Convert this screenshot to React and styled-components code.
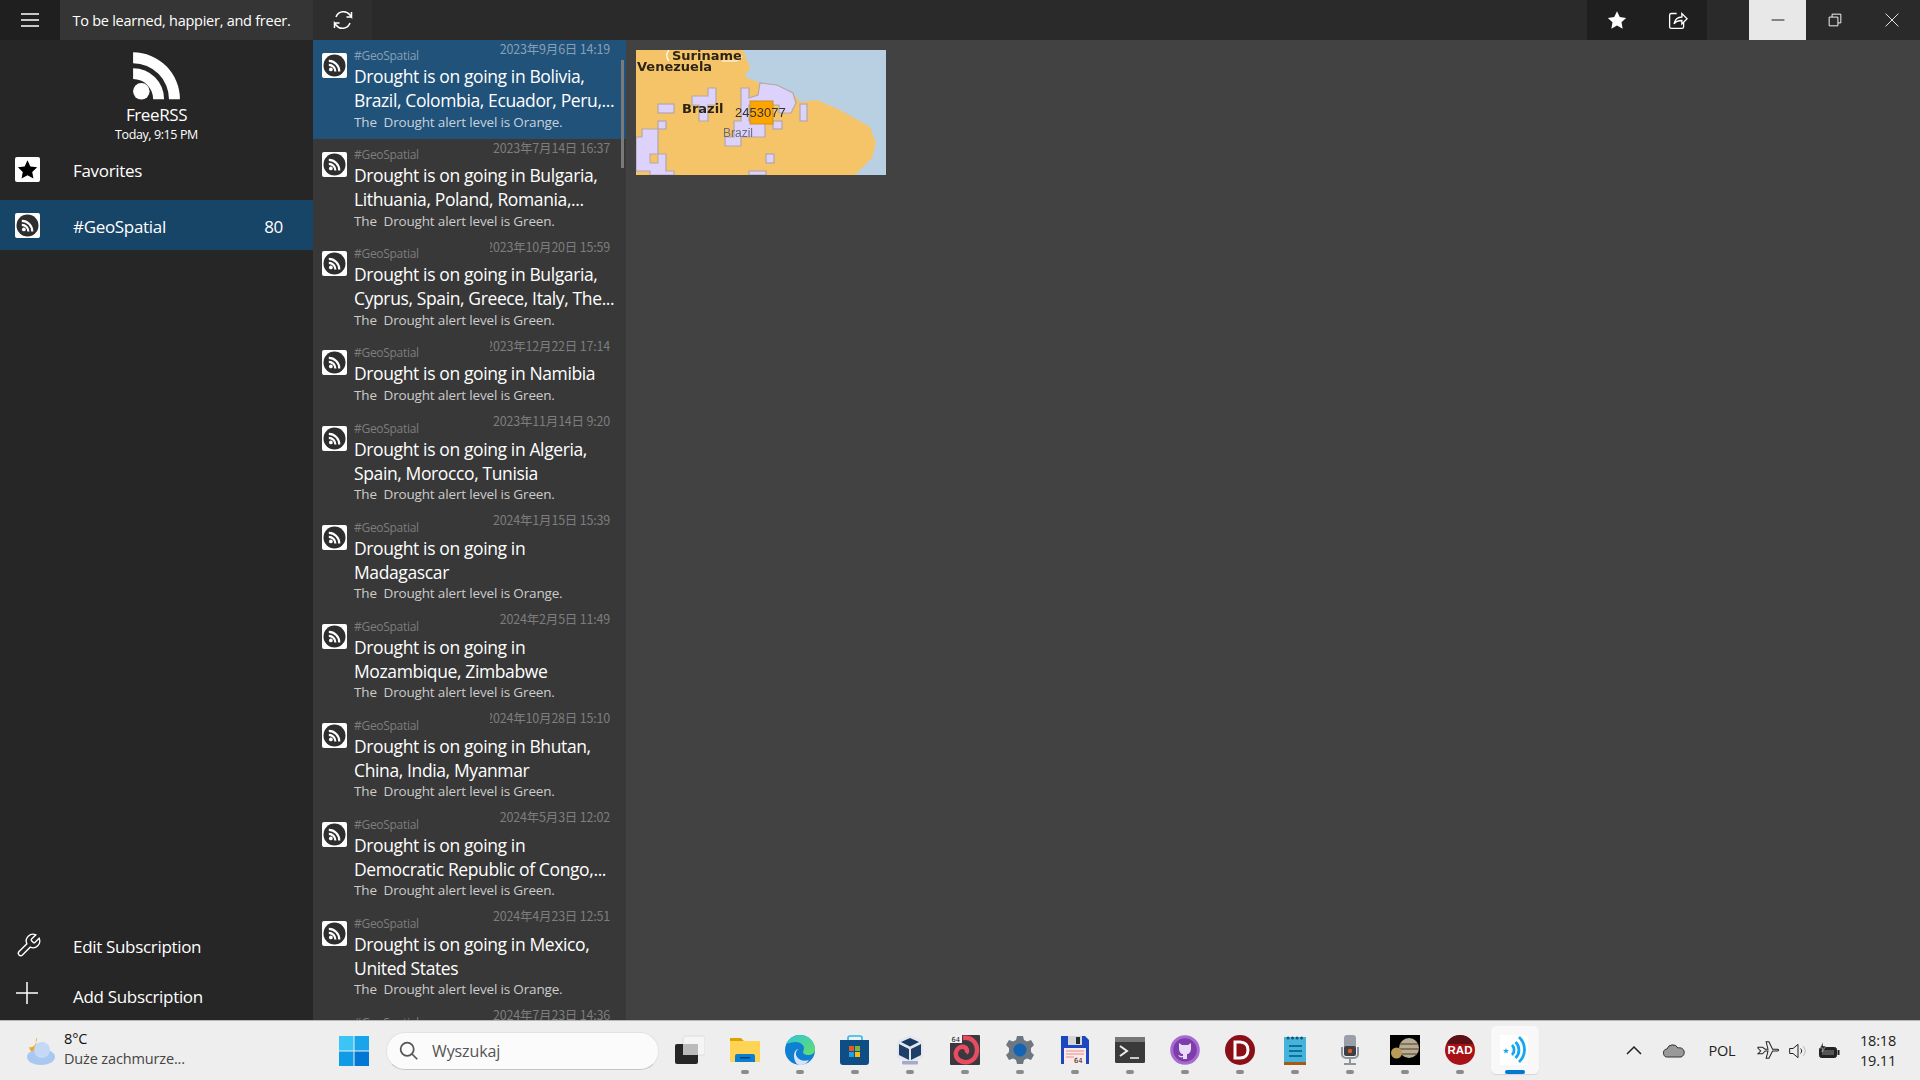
import React from "react";
import styled, { createGlobalStyle } from "styled-components";

const GlobalStyle = createGlobalStyle`
  html, body { margin: 0; padding: 0; background: #424242; }
  * { box-sizing: border-box; }
  body { font-family: "Open Sans", "Noto Sans CJK SC", sans-serif; overflow: hidden; }
`;

const Page = styled.div`
  width: 1920px;
  height: 1080px;
  display: flex;
  flex-direction: column;
  overflow: hidden;
`;

/* title bar */
const TitleBar = styled.header`
  height: 40px;
  flex: none;
  display: flex;
  background: #2a2a2a;
  color: #fff;
`;
const BarButton = styled.div`
  width: ${(p) => p.$w || 60}px;
  height: 40px;
  flex: none;
  display: flex;
  align-items: center;
  justify-content: center;
  background: ${(p) => p.$bg || "transparent"};
  color: ${(p) => p.$fg || "#fff"};
`;
const AppTitle = styled.div`
  width: 253px;
  flex: none;
  background: #353535;
  padding-left: 12.5px;
  font-size: 14.5px;
  letter-spacing: -0.26px;
  line-height: 41px;
  white-space: nowrap;
`;
const Spacer = styled.div`
  flex: 1;
`;
const BarGroup = styled.div`
  display: flex;
  background: #1f1f1f;
  margin-right: 42px;
`;

/* main */
const Main = styled.main`
  flex: 1;
  min-height: 0;
  display: flex;
`;
const Sidebar = styled.nav`
  width: 313px;
  flex: none;
  background: #262626;
  display: flex;
  flex-direction: column;
  color: #fff;
`;
const Brand = styled.div`
  height: 104px;
  padding-top: 9px;
  display: flex;
  flex-direction: column;
  align-items: center;
`;
const BrandName = styled.div`
  margin-top: 1.5px;
  font-size: 17px;
  letter-spacing: -0.4px;
  line-height: 22px;
`;
const BrandDate = styled.div`
  font-size: 12.5px;
  letter-spacing: -0.4px;
  line-height: 18px;
`;
const NavItem = styled.div`
  height: 50px;
  display: flex;
  align-items: center;
  padding: 0 30px 0 15px;
  font-size: 17px;
  letter-spacing: -0.32px;
`;
const ActiveNavItem = styled(NavItem)`
  margin-top: 6px;
  background: #174568;
`;
const NavIcon = styled.div`
  width: 58px;
  flex: none;
  display: flex;
  align-items: center;
  padding-bottom: ${(p) => p.$lift || 0}px;
`;
const NavLabel = styled.span`
  flex: 1;
  padding-top: 3px;
`;
const NavCount = styled.span`
  padding-top: 3px;
`;
const NavBottom = styled.div`
  margin-top: auto;
`;
const Badge = styled.div`
  width: 25px;
  height: 25px;
  border-radius: 2px;
  background: #fff;
  display: flex;
  align-items: center;
  justify-content: center;
`;

/* article list */
const List = styled.section`
  position: relative;
  width: 313px;
  flex: none;
  background: #383838;
  overflow: hidden;
  color: #fff;
`;
const Row = styled.article`
  height: ${(p) => (p.$lines === 1 ? 75.5 : 99)}px;
  display: flex;
  padding: 13px 0 0 9px;
  background: ${(p) => (p.$selected ? "#21527a" : "transparent")};
`;
const RowIcon = styled.div`
  width: 32px;
  flex: none;
`;
const RowBody = styled.div`
  position: relative;
  flex: 1;
  min-width: 0;
`;
const RowTag = styled.div`
  font-size: 12px;
  letter-spacing: -0.3px;
  line-height: 16px;
  color: ${(p) => (p.$selected ? "#88a0b5" : "#7d7d7d")};
  margin-top: -5px;
`;
const RowDate = styled.div`
  position: absolute;
  top: -13.5px;
  right: 16px;
  width: 120px;
  height: 18px;
  overflow: hidden;
  display: flex;
  justify-content: flex-end;
  white-space: nowrap;
  font-family: "Noto Sans CJK SC", sans-serif;
  font-size: 12.5px;
  line-height: 18px;
  letter-spacing: -0.2px;
  color: ${(p) => (p.$selected ? "#88a0b5" : "#7d7d7d")};
`;
const RowTitle = styled.div`
  font-size: 17.5px;
  line-height: 24px;
  letter-spacing: -0.38px;
  white-space: nowrap;
`;
const RowDesc = styled.div`
  margin-top: 0.5px;
  font-size: 13.5px;
  line-height: 18px;
  letter-spacing: -0.16px;
  white-space: pre;
  color: ${(p) => (p.$selected ? "#c6d3de" : "#cccccc")};
`;
const ScrollThumb = styled.div`
  position: absolute;
  top: 20px;
  right: 2px;
  width: 3px;
  height: 108px;
  background: #7a7a7a;
`;

/* detail */
const Detail = styled.section`
  flex: 1;
  background: #424242;
  padding: 10px;
`;
const MapImage = styled.svg`
  display: block;
  width: 250px;
  height: 125px;
  filter: blur(0.35px);
`;

/* taskbar */
const Taskbar = styled.footer`
  height: 60px;
  flex: none;
  display: flex;
  background: #eeeeee;
  border-top: 1px solid #b8b8b8;
  color: #222;
`;
const Weather = styled.div`
  width: 339px;
  flex: none;
  display: flex;
  align-items: center;
  padding-left: 24px;
  gap: 8px;
`;
const WeatherText = styled.div`
  font-size: 14.5px;
  line-height: 20px;
  letter-spacing: -0.15px;
  color: #444;
  margin-top: -2.5px;
`;
const WeatherTemp = styled.div`
  color: #111;
`;
const WinSlot = styled.div`
  width: 47px;
  flex: none;
  display: flex;
  align-items: center;
`;
const SearchBox = styled.div`
  width: 273px;
  height: 38px;
  flex: none;
  align-self: center;
  display: flex;
  align-items: center;
  gap: 13px;
  padding-left: 11px;
  background: #fbfbfb;
  border-radius: 19px;
  border: 1px solid #e2e2e2;
  border-bottom-color: #c4c4c4;
  font-size: 16px;
  letter-spacing: -0.12px;
  color: #555;
`;
const Apps = styled.div`
  display: flex;
  margin-left: 3.5px;
`;
const AppSlot = styled.div`
  position: relative;
  width: 55px;
  height: 59px;
  flex: none;
  display: flex;
  flex-direction: column;
  align-items: center;
  padding-top: 14px;
`;
const AppIcon = styled.div`
  width: 30px;
  height: 30px;
  display: flex;
`;
const Dot = styled.div`
  width: 8px;
  height: 4px;
  margin-top: 5px;
  border-radius: 2px;
  background: #8b8b8b;
`;
const ActiveSlot = styled(AppSlot)`
  &::before {
    content: "";
    position: absolute;
    top: 5px;
    left: 3.5px;
    width: 48px;
    height: 48px;
    border-radius: 5px;
    background: #f8f8f8;
    box-shadow: 0 1px 1px #d5d5d5;
  }
  & > * { position: relative; }
`;
const ActiveBar = styled.div`
  width: 20px;
  height: 4px;
  margin-top: 5px;
  border-radius: 2px;
  background: #0078d4;
`;
const Tray = styled.div`
  margin-left: auto;
  display: flex;
  align-items: center;
  color: #222;
`;
const TrayItem = styled.div`
  width: ${(p) => p.$w}px;
  flex: none;
  display: flex;
  justify-content: center;
  font-size: 14.5px;
  letter-spacing: -0.2px;
`;
const Clock = styled.div`
  width: 70px;
  flex: none;
  padding-right: 14px;
  text-align: center;
  font-size: 14.5px;
  line-height: 20px;
  letter-spacing: -0.2px;
`;

/* icons */
const Rss = ({ size = 25, color = "#fff" }) => (
  <svg width={size} height={size} viewBox="0 0 24 24">
    <circle cx="5.2" cy="19" r="3.7" fill={color} />
    <path d="M1.5 8.6a13.9 13.9 0 0 1 13.9 13.9h-4.9a9 9 0 0 0-9-9z" fill={color} />
    <path d="M1.5 1.5a21 21 0 0 1 21 21h-4.9A16.1 16.1 0 0 0 1.5 6.4z" fill={color} />
  </svg>
);
const FeedBadge = () => (
  <Badge>
    <svg width="23" height="23" viewBox="0 0 23 23">
      <circle cx="11.5" cy="11.5" r="11" fill="#2e2e2e" />
      <g transform="translate(5 5) scale(.55)">
        <circle cx="5.2" cy="19" r="3.4" fill="#fff" />
        <path d="M1.5 8.6a13.9 13.9 0 0 1 13.9 13.9h-4a9.9 9.9 0 0 0-9.9-9.900z" fill="#fff" />
        <path d="M1.5 1.5a21 21 0 0 1 21 21h-4A17 17 0 0 0 1.5 5.5z" fill="#fff" />
      </g>
    </svg>
  </Badge>
);
const StarBadge = () => (
  <Badge>
    <svg width="21" height="21" viewBox="0 0 24 24">
      <path d="M12 1.5l3.3 7 7.7 1-5.6 5.3 1.4 7.6L12 18.7l-6.8 3.7 1.4-7.6L1 9.5l7.7-1z" fill="#000" />
    </svg>
  </Badge>
);
const Line = ({ d, size = 24, sw = 1.5 }) => (
  <svg width={size} height={size} viewBox="0 0 24 24" fill="none" stroke="currentColor" strokeWidth={sw}>
    <path d={d} />
  </svg>
);

const Folder = () => (
  <svg width="30" height="30" viewBox="0 0 30 30">
    <path d="M0 3h11l3 3h16v21H0z" fill="#e0a100" />
    <rect y="6" width="30" height="21" fill="#ffd455" />
    <path d="M5 27v-6a2 2 0 0 1 2-2h16a2 2 0 0 1 2 2v6z" fill="#0a7fd0" />
    <rect x="10" y="22" width="10" height="1.5" fill="#063d70" />
  </svg>
);
const TaskView = () => (
  <svg width="30" height="30" viewBox="0 0 30 30">
    <rect x="8" y="1" width="22" height="19" rx="2" fill="#f5f5f5" stroke="#ddd" />
    <rect y="9" width="23" height="20" rx="2" fill="#262626" />
    <rect x="8" y="9" width="15" height="11" fill="#bbb" />
  </svg>
);
const Edge = () => (
  <svg width="30" height="30" viewBox="0 0 30 30">
    <defs>
      <linearGradient id="edgeA" x1="0" y1="0" x2="1" y2="1">
        <stop offset="0" stopColor="#2ec6d8" />
        <stop offset="1" stopColor="#67de6a" />
      </linearGradient>
    </defs>
    <circle cx="15" cy="15" r="15" fill="#0f7fd2" />
    <path d="M1 9C4 2 11 0 15 0c9 0 15 7 15 14 0 5-4 6-7 6-3 0-5-1-5-3 0-1 1-2 1-4 0-3-4-6-8-6-4 0-8 1-10 2z" fill="url(#edgeA)" />
    <path d="M14 14c-3 1-4 5-2 8 2 3 7 5 12 3-2 3-5 5-9 5C11 30 9 25 9 21c0-4 2-7 5-7z" fill="#eef" opacity=".9" />
  </svg>
);
const Store = () => (
  <svg width="30" height="30" viewBox="0 0 30 30">
    <path d="M8 6V3a2 2 0 0 1 2-2h10a2 2 0 0 1 2 2v3" fill="none" stroke="#28b8ea" strokeWidth="1.6" />
    <path d="M0 5h29v22a3 3 0 0 1-3 3H3a3 3 0 0 1-3-3z" fill="#0f4d85" />
    <rect x="9" y="11" width="5" height="5" fill="#e8562a" />
    <rect x="15" y="11" width="5" height="5" fill="#7cb82f" />
    <rect x="9" y="17" width="5" height="5" fill="#1ba2e6" />
    <rect x="15" y="17" width="5" height="5" fill="#fdb813" />
  </svg>
);
const VBox = () => (
  <svg width="30" height="30" viewBox="0 0 30 30">
    <path d="M15 0l13 6v17l-13 6-13-6V6z" fill="#e4e8ee" />
    <path d="M15 3l9 4-9 4.5L6 7z" fill="#183a64" />
    <path d="M4 9l10 5v11L4 20zM26 9l-10 5v11l10-5z" fill="#1e3f68" />
    <rect x="7" y="26" width="16" height="3.5" rx="1" fill="#a6a9c8" />
  </svg>
);
const Debian = () => (
  <svg width="30" height="30" viewBox="0 0 30 30">
    <rect width="30" height="30" rx="1" fill="#3b3940" />
    <path d="M13 3c8-1 14 4 14 12s-6 13-13 12c-6-1-9-5-8-10 1-4 5-6 8-5s4 4 2 6" fill="none" stroke="#ea4c5f" strokeWidth="4.5" />
    <rect width="12" height="8" fill="#f2f2f2" />
    <text x="1.5" y="7" fontSize="7" fontFamily="DejaVu Sans Mono" fill="#222">64</text>
  </svg>
);
const Gear = () => (
  <svg width="30" height="30" viewBox="0 0 30 30">
    <path d="M12 1h6l1 4 3 1.5 4-1.5 3 5-3 3v4l3 3-3 5-4-1.5-3 1.5-1 4h-6l-1-4-3-1.5-4 1.5-3-5 3-3v-4l-3-3 3-5 4 1.5 3-1.5z" fill="#6d7781" />
    <circle cx="15" cy="15" r="6.5" fill="#1464b4" />
  </svg>
);
const Floppy = () => (
  <svg width="30" height="30" viewBox="0 0 30 30">
    <path d="M1 1h24l4 4v24H1z" fill="#1c47c0" />
    <rect x="8" y="1" width="14" height="9" fill="#d5d5d5" />
    <rect x="16" y="2" width="4" height="7" fill="#2a2a2a" />
    <rect x="4" y="13" width="22" height="16" fill="#fbe9e9" />
    <path d="M6 16h18M6 19h18M6 22h8" stroke="#e78b8b" />
    <text x="14" y="28" fontSize="7" fontFamily="DejaVu Sans Mono" fill="#222">64</text>
  </svg>
);
const Terminal = () => (
  <svg width="30" height="30" viewBox="0 0 30 30">
    <rect y="2" width="30" height="26" rx="1.5" fill="#3a3a3a" />
    <rect y="2" width="30" height="5" fill="#777" />
    <path d="M5 11l7 5-7 5" fill="none" stroke="#eee" strokeWidth="2" />
    <path d="M15 23h9" stroke="#eee" strokeWidth="1.6" />
  </svg>
);
const GitHub = () => (
  <svg width="30" height="30" viewBox="0 0 30 30">
    <circle cx="15" cy="15" r="13.3" fill="#7d3dab" stroke="#a66bd0" strokeWidth="3" />
    <path d="M9 8l3 2h6l3-2v5c0 4-2 6-4 6v5h-4v-2c-2 1-4 0-5-2 1 0 2 1 3 1h2v-2c-2 0-4-2-4-6z" fill="#eadcf5" />
  </svg>
);
const Dlang = () => (
  <svg width="30" height="30" viewBox="0 0 30 30">
    <circle cx="15" cy="15" r="15" fill="#8b0f16" />
    <path d="M10 7h5c5 0 8 3 8 8s-3 8-8 8h-5z" fill="none" stroke="#fff" strokeWidth="3" />
  </svg>
);
const Notepad = () => (
  <svg width="30" height="30" viewBox="0 0 30 30">
    <rect x="4" y="2" width="22" height="27" fill="#46b3da" />
    <rect x="4" y="27" width="22" height="3" fill="#a65a14" />
    <path d="M8 3h.1M12.5 3h.1M17 3h.1M21.5 3h.1" stroke="#155c7c" strokeWidth="3" strokeLinecap="round" />
    <path d="M9 11h13M9 16h13M9 21h13" stroke="#0f6f9e" strokeWidth="2" />
  </svg>
);
const Mic = () => (
  <svg width="30" height="30" viewBox="0 0 30 30">
    <rect x="9" y="0" width="12" height="20" rx="3" fill="#9aa0a8" />
    <rect x="9" y="11" width="12" height="10" rx="2" fill="#3c3f44" />
    <circle cx="15" cy="16" r="2.2" fill="#e8561f" />
    <path d="M7 12v7a4 4 0 0 0 4 4h8a4 4 0 0 0 4-4v-7M15 23v5M9 29h12" fill="none" stroke="#8c949c" strokeWidth="2" />
  </svg>
);
const Jupiter = () => (
  <svg width="30" height="30" viewBox="0 0 30 30">
    <defs>
      <clipPath id="bigPlanet"><circle cx="19" cy="13" r="10" /></clipPath>
    </defs>
    <rect width="30" height="30" fill="#000" />
    <g clipPath="url(#bigPlanet)">
      <rect x="9" y="3" width="20" height="20" fill="#b5ad96" />
      <path d="M9 9h20M9 14h20M9 19h20" stroke="#7a5f48" strokeWidth="1.5" />
    </g>
    <circle cx="6.5" cy="18" r="5.5" fill="#b89b58" />
  </svg>
);
const Rad = () => (
  <svg width="30" height="30" viewBox="0 0 30 30">
    <circle cx="15" cy="15" r="15" fill="#a81216" />
    <path d="M3 6a15 15 0 0 1 24 0l1 3H2z" fill="#5b1016" />
    <text x="15" y="19" textAnchor="middle" fontSize="11.5" fontWeight="700" fontFamily="Liberation Sans" fill="#fff">RAD</text>
  </svg>
);
const FreeRssApp = () => (
  <svg width="30" height="30" viewBox="0 0 30 30">
    <rect width="28" height="30" fill="#fff" />
    <path d="M6 13l.8 2 2.2.1-1.7 1.3.6 2.1L6 17.300l-1.900 1.200.6-2.100L3 15.100l2.200-.1z" fill="#14a7f0" />
    <g fill="none" stroke="#14a7f0" strokeWidth="2.8">
      <path d="M12 10a7 7 0 0 1 0 10" />
      <path d="M15.5 7a11 11 0 0 1 0 16" />
      <path d="M19 2a17 17 0 0 1 0 25" />
    </g>
  </svg>
);

const MapPicture = () => (
  <MapImage viewBox="0 0 250 125">
    <rect width="250" height="125" fill="#b9cfe2" />
    <path d="M0 0H107L114 17 109 27 124 33 141 35 157 43 164 52 181 50 204 60 234 77 240 93 236 108 219 125H0z" fill="#f5c469" />
    <g fill="#dcd2fb" stroke="#b3a7a8" strokeWidth="1.2">
      <path d="M72 38h8v17H72v16h-9V55H56v-9h16z" />
      <rect x="22" y="54" width="16" height="9" />
      <rect x="22" y="71" width="8" height="8" />
      <path d="M105 38h8v10l9-3 2-12 17 2 16 8 3 10-5 10h-12v-8h-30v16h16v16H105v9H89v-9h9V71h7z" />
      <rect x="137" y="71" width="9" height="8" />
      <rect x="164" y="54" width="7" height="17" />
      <path d="M0 87h6V79h16v25h8v17h8v4H14v-4H0z" />
      <rect x="130" y="104" width="8" height="9" />
      <rect x="113" y="121" width="17" height="4" />
    </g>
    <rect x="14" y="104" width="8" height="9" fill="#f5c469" stroke="#b3a7a8" />
    <rect x="114" y="51" width="23" height="23" fill="#ffa500" stroke="#c8902e" />
    <path d="M33 0c-3 3-3 8 0 11M86 11h14c2 0 4-3 6-5" fill="none" stroke="#fff" strokeWidth="1.2" />
    <g fontFamily="DejaVu Sans" fontWeight="700" fill="#2c2416">
      <text x="36" y="10" fontSize="13">Suriname</text>
      <text x="1" y="21" fontSize="13">Venezuela</text>
      <text x="46" y="63" fontSize="13">Brazil</text>
    </g>
    <text x="99" y="67" fontSize="13" fontFamily="Liberation Sans" fill="#333">2453077</text>
    <text x="87" y="87" fontSize="12" fontFamily="Liberation Sans" fill="#6d6a80">Brazil</text>
  </MapImage>
);

const rows = [
  { date: "2023年9月6日 14:19", title: ["Drought is on going in Bolivia,", "Brazil, Colombia, Ecuador, Peru,..."], desc: "The  Drought alert level is Orange.", selected: true },
  { date: "2023年7月14日 16:37", title: ["Drought is on going in Bulgaria,", "Lithuania, Poland, Romania,..."], desc: "The  Drought alert level is Green." },
  { date: "2023年10月20日 15:59", title: ["Drought is on going in Bulgaria,", "Cyprus, Spain, Greece, Italy, The..."], desc: "The  Drought alert level is Green." },
  { date: "2023年12月22日 17:14", title: ["Drought is on going in Namibia"], desc: "The  Drought alert level is Green." },
  { date: "2023年11月14日 9:20", title: ["Drought is on going in Algeria,", "Spain, Morocco, Tunisia"], desc: "The  Drought alert level is Green." },
  { date: "2024年1月15日 15:39", title: ["Drought is on going in", "Madagascar"], desc: "The  Drought alert level is Orange." },
  { date: "2024年2月5日 11:49", title: ["Drought is on going in", "Mozambique, Zimbabwe"], desc: "The  Drought alert level is Green." },
  { date: "2024年10月28日 15:10", title: ["Drought is on going in Bhutan,", "China, India, Myanmar"], desc: "The  Drought alert level is Green." },
  { date: "2024年5月3日 12:02", title: ["Drought is on going in", "Democratic Republic of Congo,..."], desc: "The  Drought alert level is Green." },
  { date: "2024年4月23日 12:51", title: ["Drought is on going in Mexico,", "United States"], desc: "The  Drought alert level is Orange." },
  { date: "2024年7月23日 14:36", title: [] },
];

const apps = [TaskView, Folder, Edge, Store, VBox, Debian, Gear, Floppy, Terminal, GitHub, Dlang, Notepad, Mic, Jupiter, Rad];

export default function App() {
  return (
    <Page>
      <GlobalStyle />
      <TitleBar>
        <BarButton $bg="#1f1f1f">
          <Line d="M3 6h18M3 12h18M3 18h18" />
        </BarButton>
        <AppTitle>To be learned, happier, and freer.</AppTitle>
        <BarButton $w={59} $bg="#2e2e2e">
          <Line d="M5 9a8 8 0 0 1 14-2l1.5 2V4M19 15a8 8 0 0 1-14 2l-1.5-2v5M20.5 9h-5M3.5 15h5" />
        </BarButton>
        <Spacer />
        <BarGroup>
          <BarButton>
            <svg width="20" height="20" viewBox="0 0 24 24">
              <path d="M12 1.5l3.3 7 7.7 1-5.6 5.3 1.4 7.6L12 18.7l-6.8 3.7 1.4-7.6L1 9.5l7.7-1z" fill="#fff" />
            </svg>
          </BarButton>
          <BarButton>
            <Line size={21} d="M11 4H5a2 2 0 0 0-2 2v13a2 2 0 0 0 2 2h12a2 2 0 0 0 2-2v-5M8 16c1-5 4-8 9-8V4l6 6-6 6v-4c-4 0-7 1-9 4z" />
          </BarButton>
        </BarGroup>
        <BarButton $w={57} $bg="#e8e8e8" $fg="#000">
          <Line size={14} d="M1 12h22" />
        </BarButton>
        <BarButton $w={57}>
          <Line size={14} sw={1.6} d="M2 7h15v15H2zM7 7V2h15v15h-5" />
        </BarButton>
        <BarButton $w={57}>
          <Line size={14} d="M1 1l22 22M23 1L1 23" />
        </BarButton>
      </TitleBar>

      <Main>
        <Sidebar>
          <Brand>
            <Rss size={57} />
            <BrandName>FreeRSS</BrandName>
            <BrandDate>Today, 9:15 PM</BrandDate>
          </Brand>
          <NavItem>
            <NavIcon><StarBadge /></NavIcon>
            <NavLabel>Favorites</NavLabel>
          </NavItem>
          <ActiveNavItem>
            <NavIcon><FeedBadge /></NavIcon>
            <NavLabel>#GeoSpatial</NavLabel>
            <NavCount>80</NavCount>
          </ActiveNavItem>
          <NavBottom>
            <NavItem>
              <NavIcon>
                <Line size={27} sw={1.2} d="M14.7 6.3a1 1 0 0 0 0 1.4l1.6 1.6a1 1 0 0 0 1.4 0l3.77-3.77a6 6 0 0 1-7.94 7.94l-6.91 6.91a2.12 2.12 0 0 1-3-3l6.91-6.91a6 6 0 0 1 7.94-7.94l-3.76 3.76z" />
              </NavIcon>
              <NavLabel>Edit Subscription</NavLabel>
            </NavItem>
            <NavItem>
              <NavIcon $lift={4}>
                <Line size={24} d="M12 1v22M1 12h22" />
              </NavIcon>
              <NavLabel>Add Subscription</NavLabel>
            </NavItem>
          </NavBottom>
        </Sidebar>

        <List>
          {rows.map((r) => (
            <Row key={r.date} $selected={r.selected} $lines={r.title.length}>
              <RowIcon><FeedBadge /></RowIcon>
              <RowBody>
                <RowTag $selected={r.selected}>#GeoSpatial</RowTag>
                <RowDate $selected={r.selected}>{r.date}</RowDate>
                {r.title.map((t) => <RowTitle key={t}>{t}</RowTitle>)}
                {r.desc && <RowDesc $selected={r.selected}>{r.desc}</RowDesc>}
              </RowBody>
            </Row>
          ))}
          <ScrollThumb />
        </List>

        <Detail>
          <MapPicture />
        </Detail>
      </Main>

      <Taskbar>
        <Weather>
          <svg width="32" height="30" viewBox="0 0 32 30">
            <path d="M13 1a8 8 0 0 0 7 12 8 8 0 0 1-15-2c2 1 8 0 8-10z" fill="#f5a623" />
            <ellipse cx="17" cy="21" rx="14" ry="8" fill="#a9c8ef" />
            <circle cx="18" cy="14" r="8" fill="#c3d9f5" />
          </svg>
          <WeatherText>
            <WeatherTemp>8°C</WeatherTemp>
            Duże zachmurze...
          </WeatherText>
        </Weather>
        <WinSlot>
          <svg width="30" height="30" viewBox="0 0 30 30">
            <rect width="14.5" height="14.5" fill="#3cc4f5" />
            <rect x="15.5" width="14.5" height="14.5" fill="#18a5ea" />
            <rect y="15.5" width="14.5" height="14.5" fill="#0f9be6" />
            <rect x="15.5" y="15.5" width="14.5" height="14.5" fill="#0278d4" />
          </svg>
        </WinSlot>
        <SearchBox>
          <Line size={21} sw={2} d="M10.5 3a7.5 7.5 0 1 0 0 15 7.5 7.5 0 0 0 0-15zM16 16l6 6" />
          Wyszukaj
        </SearchBox>
        <Apps>
          {apps.map((Icon, i) => (
            <AppSlot key={i}>
              <AppIcon><Icon /></AppIcon>
              {i > 0 && <Dot />}
            </AppSlot>
          ))}
          <ActiveSlot>
            <AppIcon><FreeRssApp /></AppIcon>
            <ActiveBar />
          </ActiveSlot>
        </Apps>
        <Tray>
          <TrayItem $w={36}><Line size={24} d="M5 15l7-7 7 7" /></TrayItem>
          <TrayItem $w={44}>
            <svg width="22" height="16" viewBox="0 0 22 16">
              <path d="M5 14a4 4 0 0 1-1-8 6 6 0 0 1 11-1 4.5 4.5 0 0 1 3 9z" fill="#999" stroke="#333" />
            </svg>
          </TrayItem>
          <TrayItem $w={52}>POL</TrayItem>
          <TrayItem $w={40}>
            <Line size={22} sw={1.1} d="M1 9l3 3-3 3h5l3-3h3l-2 8h3l4-8h5c2 0 2-2 0-2h-5L13 2h-3l2 8H9L6 8H1z" />
          </TrayItem>
          <TrayItem $w={20}>
            <svg width="20" height="20" viewBox="0 0 24 24" fill="none" strokeWidth="1.2">
              <path d="M2 9v6h4l6 5V4L6 9z" stroke="#222" />
              <path d="M15 9a4 4 0 0 1 0 6" stroke="#222" />
              <path d="M18 6a8 8 0 0 1 0 12" stroke="#bbb" />
            </svg>
          </TrayItem>
          <TrayItem $w={42}>
            <svg width="22" height="18" viewBox="0 0 22 18">
              <rect x="1.5" y="5.5" width="17" height="10" rx="2" fill="#222" stroke="#222" />
              <rect x="4" y="8" width="12" height="5" fill="#555" />
              <rect x="19.5" y="8" width="2" height="5" fill="#222" />
              <path d="M5 0l-3 6h3l-1 4 4-6H5z" fill="#222" stroke="#eee" strokeWidth=".5" />
            </svg>
          </TrayItem>
          <Clock>18:18<br />19.11</Clock>
        </Tray>
      </Taskbar>
    </Page>
  );
}
